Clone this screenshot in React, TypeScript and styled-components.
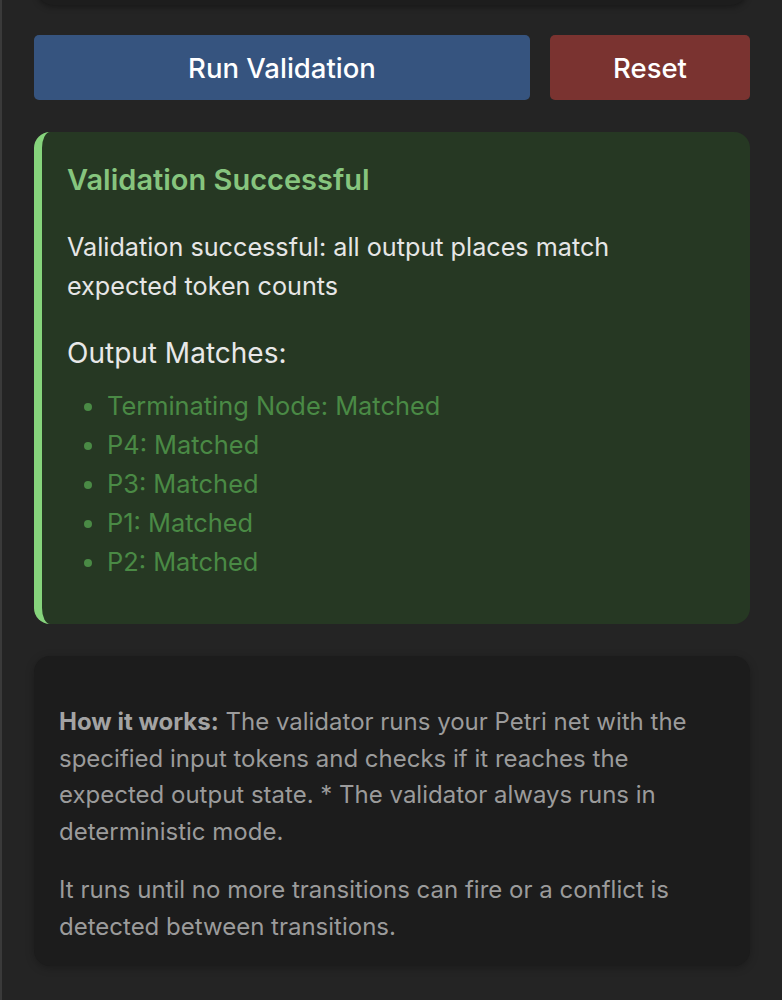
import React from "react";
import styled, { createGlobalStyle } from "styled-components";

const Global = createGlobalStyle`
  html, body { margin: 0; padding: 0; background: #242424; }
  body { font-family: Inter, "Noto Sans", sans-serif; -webkit-font-smoothing: antialiased; }
  * { box-sizing: border-box; }
`;

const Page = styled.div`
  height: 1000px;
  overflow: hidden;
  border-left: 2px solid #3a3a3a;
  padding: 0 32px 0 32px;
  display: flex;
  flex-direction: column;
`;

const TopCard = styled.div`
  flex: 0 0 auto;
  height: 45px;
  margin: -40px 3px 0 3px;
  background: #1d1d1d;
  border-radius: 0 0 16px 16px;
  box-shadow: 0 2px 6px rgba(0, 0, 0, 0.35);
`;

const ButtonRow = styled.div`
  display: flex;
  gap: 20px;
  margin-top: 30px;
`;

const Button = styled.button<{ $variant: "primary" | "danger" }>`
  height: 65px;
  border: none;
  border-radius: 5px;
  font-family: Inter, "Noto Sans", sans-serif;
  font-size: 27.5px;
  font-weight: 500;
  color: #ffffff;
  cursor: pointer;
  flex: ${(p) => (p.$variant === "primary" ? "1 1 auto" : "0 0 200px")};
  background: ${(p) => (p.$variant === "primary" ? "#36547f" : "#7a3330")};
`;

const SuccessBox = styled.div`
  flex: 0 0 auto;
  margin-top: 32px;
  background: #263823;
  border-left: 8px solid #86d47c;
  border-radius: 16px;
  padding: 30px 25px 44px 25px;
  height: 492px;
`;

const SuccessTitle = styled.h3`
  margin: 0;
  font-size: 29px;
  font-weight: 600;
  color: #86c57e;
  line-height: 36px;
`;

const Message = styled.p`
  margin: 29.5px 0 0 0;
  font-size: 25.2px;
  line-height: 39px;
  color: #e6e6e6;
`;

const SubTitle = styled.h4`
  margin: 29.5px 0 0 0;
  font-size: 28px;
  font-weight: 400;
  line-height: 36px;
  color: #e8e8e8;
`;

const MatchList = styled.ul`
  margin: 14.5px 0 0 0;
  padding-left: 40px;
  list-style: disc;
  color: #4a8a45;
`;

const MatchItem = styled.li`
  font-size: 25.4px;
  line-height: 39px;
  color: #4a8a45;
`;

const InfoBox = styled.div`
  flex: 0 0 auto;
  margin-top: 32px;
  background: #1c1c1c;
  border-radius: 16px;
  box-shadow: 0 2px 8px rgba(0, 0, 0, 0.25);
  padding: 48px 25px 22px 25px;
  height: 310px;
`;

const InfoText = styled.p`
  margin: 0 0 22px 0;
  font-size: 24px;
  line-height: 36.5px;
  color: #9b9b9b;
  &:last-child { margin-bottom: 0; }
`;

const Strong = styled.strong`
  font-weight: 700;
  color: #a3a3a3;
`;

const matches = ["Terminating Node", "P4", "P3", "P1", "P2"];

export default function App() {
  return (
    <>
      <Global />
      <Page>
        <TopCard />
        <ButtonRow>
          <Button $variant="primary">Run Validation</Button>
          <Button $variant="danger">Reset</Button>
        </ButtonRow>
        <SuccessBox>
          <SuccessTitle>Validation Successful</SuccessTitle>
          <Message>
            Validation successful: all output places match expected token counts
          </Message>
          <SubTitle>Output Matches:</SubTitle>
          <MatchList>
            {matches.map((m) => (
              <MatchItem key={m}>{m}: Matched</MatchItem>
            ))}
          </MatchList>
        </SuccessBox>
        <InfoBox>
          <InfoText>
            <Strong>How it works:</Strong> The validator runs your Petri net with the
            specified input tokens and checks if it reaches the expected output state. *
            The validator always runs in deterministic mode.
          </InfoText>
          <InfoText>
            It runs until no more transitions can fire or a conflict is detected between
            transitions.
          </InfoText>
        </InfoBox>
      </Page>
    </>
  );
}
